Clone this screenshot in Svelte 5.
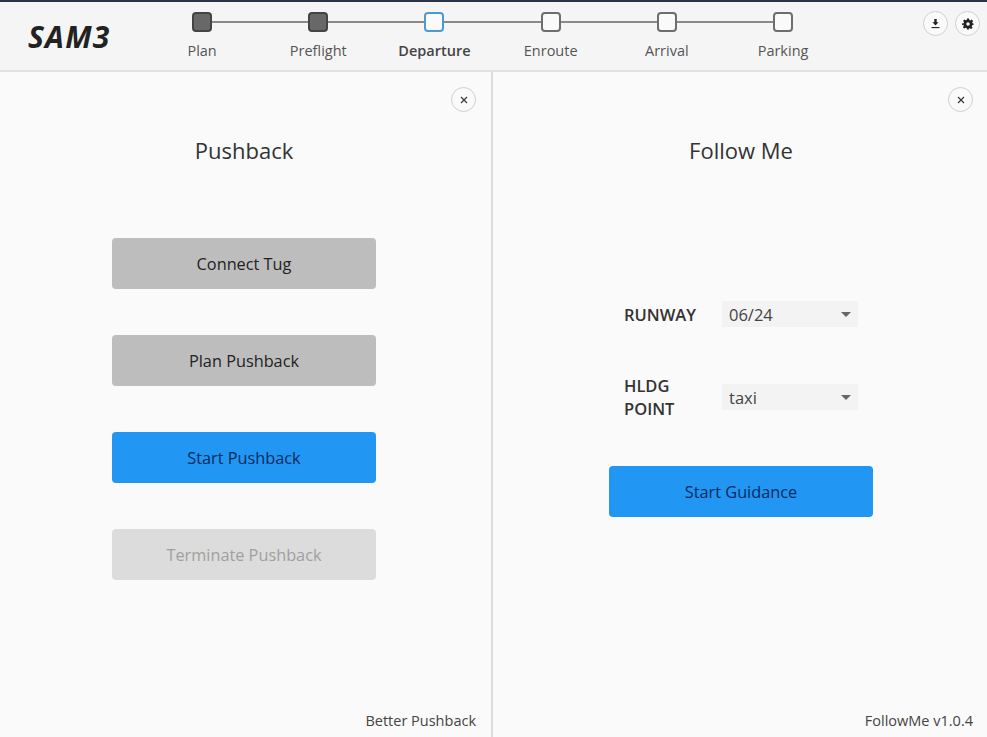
<script>
  const steps = [
    { name: "Plan", state: "done" },
    { name: "Preflight", state: "done" },
    { name: "Departure", state: "current" },
    { name: "Enroute", state: "todo" },
    { name: "Arrival", state: "todo" },
    { name: "Parking", state: "todo" }
  ];
  const pushback = [
    { label: "Connect Tug", kind: "grey" },
    { label: "Plan Pushback", kind: "grey" },
    { label: "Start Pushback", kind: "blue" },
    { label: "Terminate Pushback", kind: "off" }
  ];
</script>

<div class="app">
  <header class="topbar">
    <div class="logo">SAM3</div>
    <ol class="stepper">
      {#each steps as step, i}
        <li class="step {step.state}">
          {#if i < steps.length - 1}<span class="link"></span>{/if}
          <span class="box"></span>
          <span class="name">{step.name}</span>
        </li>
      {/each}
    </ol>
    <div class="tools">
      <button class="round" aria-label="Download">
        <svg width="11" height="11" viewBox="0 0 10 10"><path d="M3.900 1h2.200v2.800h1.700L5 6.800 2.200 3.800h1.700z" fill="#222"/><rect x="1.400" y="8.200" width="7.200" height="1" fill="#222"/></svg>
      </button>
      <button class="round" aria-label="Settings">
        <svg width="12" height="12" viewBox="0 0 24 24"><path fill="#222" fill-rule="evenodd" d="M10 1h4l.7 3.200 1.900.8 2.800-1.800 2.800 2.800-1.800 2.800.8 1.900L23 11v3l-2.800.7-.8 1.900 1.800 2.800-2.800 2.800-2.800-1.800-1.900.8L14 23h-4l-.7-2.800-1.900-.8-2.800 1.800-2.800-2.800 1.800-2.800-.8-1.900L0 14v-3l3.200-.7.8-1.900-1.800-2.800L5 2.800l2.800 1.800 1.900-.8zM12 8.500a3.500 3.500 0 1 0 0 7 3.500 3.500 0 0 0 0-7z"/></svg>
      </button>
    </div>
  </header>

  <main class="panels">
    <section class="panel left">
      <button class="round close" aria-label="Close">
        <svg width="8" height="8" viewBox="0 0 8 8"><path d="M1 1l6 6M7 1L1 7" stroke="#333" stroke-width="1.100"/></svg>
      </button>
      <h2>Pushback</h2>
      <div class="actions">
        {#each pushback as b}
          <button class="action {b.kind}">{b.label}</button>
        {/each}
      </div>
      <footer>Better Pushback</footer>
    </section>

    <section class="panel right">
      <button class="round close" aria-label="Close">
        <svg width="8" height="8" viewBox="0 0 8 8"><path d="M1 1l6 6M7 1L1 7" stroke="#333" stroke-width="1.100"/></svg>
      </button>
      <h2>Follow Me</h2>
      <div class="form">
        <div class="row first">
          <span class="lbl">RUNWAY</span>
          <div class="select"><span>06/24</span><i class="caret"></i></div>
        </div>
        <div class="row second">
          <span class="lbl">HLDG<br />POINT</span>
          <div class="select"><span>taxi</span><i class="caret"></i></div>
        </div>
        <button class="action blue">Start Guidance</button>
      </div>
      <footer>FollowMe v1.0.4</footer>
    </section>
  </main>
</div>

<style>
  :global(body) {
    margin: 0;
    background: #fafafa;
  }

  .app {
    width: 987px;
    height: 737px;
    display: flex;
    flex-direction: column;
    overflow: hidden;
    font-family: "Open Sans", "Noto Sans", sans-serif;
    color: #333;
    background: #fafafa;
  }

  /* top bar */
  .topbar {
    height: 68px;
    flex: none;
    display: flex;
    border-top: 2px solid #2b3442;
    border-bottom: 2px solid #e2e2e2;
    background: #f5f5f5;
  }

  .logo {
    width: 144px;
    flex: none;
    box-sizing: border-box;
    padding: 16px 0 0 28px;
    font-size: 30px;
    letter-spacing: 1.200px;
    line-height: 38px;
    font-weight: 700;
    font-style: italic;
    color: #222;
  }

  .stepper {
    display: flex;
    margin: 0;
    padding: 0;
    list-style: none;
  }

  .step {
    position: relative;
    width: 116.200px;
    display: flex;
    flex-direction: column;
    align-items: center;
    padding-top: 10px;
  }

  .link {
    position: absolute;
    top: 19px;
    left: 50%;
    width: 100%;
    height: 2px;
    background: #8a8a8a;
  }

  .box {
    position: relative;
    width: 20px;
    height: 20px;
    box-sizing: border-box;
    border: 2px solid #6e6e6e;
    border-radius: 4px;
    background: #fafafa;
  }

  .done .box {
    background: #686868;
    border-color: #444;
  }

  .current .box {
    border-color: #4a9bd4;
  }

  .name {
    margin-top: 8px;
    font-size: 14.500px;
    line-height: 22px;
    color: #555;
  }

  .current .name {
    font-weight: 600;
    color: #444;
  }

  .tools {
    margin-left: auto;
    display: flex;
    gap: 7px;
    padding: 9px 7px 0 0;
  }

  .round {
    width: 25px;
    height: 25px;
    padding: 0;
    display: flex;
    align-items: center;
    justify-content: center;
    box-sizing: border-box;
    border: 1.500px solid #cfcfcf;
    border-radius: 50%;
    background: #fafafa;
  }

  /* panels */
  .panels {
    flex: 1;
    display: flex;
  }

  .panel {
    display: flex;
    flex-direction: column;
    align-items: center;
    box-sizing: border-box;
    padding-top: 15px;
  }

  .left {
    width: 493px;
    flex: none;
    border-right: 2px solid #dcdcdc;
    padding-right: 3px;
  }

  .right {
    flex: 1;
    padding-left: 2px;
  }

  .close {
    align-self: flex-end;
    flex: none;
  }

  .left .close {
    margin-right: 12px;
  }

  .right .close {
    margin-right: 14px;
  }

  h2 {
    margin: 23px 0 0;
    font-size: 22px;
    line-height: 30px;
    font-weight: 400;
    color: #333;
  }

  .actions {
    margin-top: 73px;
    display: flex;
    flex-direction: column;
    gap: 46px;
  }

  .action {
    width: 264px;
    height: 51px;
    padding: 0;
    border: none;
    border-radius: 4px;
    font-family: inherit;
    font-size: 16.300px;
    color: #222;
  }

  .grey {
    background: #bdbdbd;
  }

  .blue {
    background: #2196f3;
    color: #0c2a5c;
  }

  .off {
    background: #dcdcdc;
    color: #a0a0a0;
  }

  /* follow me form */
  .form {
    margin-top: 136px;
    width: 264px;
    display: flex;
    flex-direction: column;
  }

  .row {
    display: flex;
    align-items: center;
    padding-left: 15px;
  }

  .second {
    margin-top: 47px;
  }

  .form .action {
    margin-top: 46px;
  }

  .lbl {
    width: 98px;
    flex: none;
    font-size: 16.500px;
    line-height: 23px;
    font-weight: 600;
    color: #333;
  }

  .select {
    width: 136px;
    height: 26px;
    box-sizing: border-box;
    display: flex;
    align-items: center;
    justify-content: space-between;
    padding: 0 7px 0 7px;
    background: #f3f3f3;
    font-size: 16.500px;
    color: #444;
  }

  .caret {
    border-left: 5px solid transparent;
    border-right: 5px solid transparent;
    border-top: 5px solid #666;
  }

  footer {
    margin-top: auto;
    align-self: flex-end;
    padding: 0 11px 5px 0;
    font-size: 14.500px;
    line-height: 22px;
    color: #444;
  }

  .left footer {
    padding-right: 12px;
  }

  .right footer {
    padding-right: 14px;
  }
</style>
